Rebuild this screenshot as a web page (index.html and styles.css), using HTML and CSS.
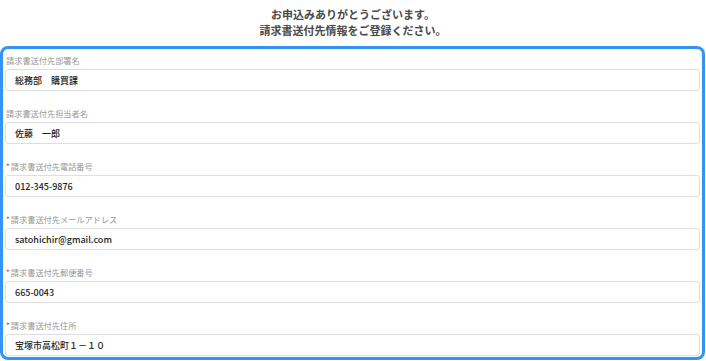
FILE: index.html
```html
<!DOCTYPE html>
<html lang="ja">
<head>
    <meta charset="UTF-8">
    <meta name="viewport" content="width=device-width, initial-scale=1.0">
    <title>請求書送付先情報</title>
    <link rel="stylesheet" href="styles.css">
</head>
<body>
    <div class="intro">
        <p>お申込みありがとうございます。</p>
        <p>請求書送付先情報をご登録ください。</p>
    </div>

    <form class="billing-box">
        <div class="field">
            <label>請求書送付先部署名</label>
            <input type="text" value="総務部　購買課">
        </div>
        <div class="field">
            <label>請求書送付先担当者名</label>
            <input type="text" value="佐藤　一郎">
        </div>
        <div class="field">
            <label class="required">請求書送付先電話番号</label>
            <input type="text" value="012-345-9876">
        </div>
        <div class="field">
            <label class="required">請求書送付先メールアドレス</label>
            <input type="text" value="satohichir@gmail.com">
        </div>
        <div class="field">
            <label class="required">請求書送付先郵便番号</label>
            <input type="text" value="665-0043">
        </div>
        <div class="field">
            <label class="required">請求書送付先住所</label>
            <input type="text" value="宝塚市高松町１－１０">
        </div>
    </form>
</body>
</html>
```

FILE: styles.css
```css
body {
    margin: 0;
    font-family: "Noto Sans CJK JP", "Noto Sans", sans-serif;
    background-color: #ffffff;
    color: #333;
}
.intro {
    padding-top: 6px;
    height: 40px;
    box-sizing: border-box;
    text-align: center;
}
.intro p {
    margin: 0;
    font-size: 11px;
    line-height: 16px;
    font-weight: bold;
    color: #4a4a4a;
}
.billing-box {
    width: 705px;
    margin-top: 6px;
    box-sizing: border-box;
    border: 3px solid #3394f5;
    border-radius: 8px;
    padding: 5px 2px 1px 2px;
}
.field {
    display: flex;
    flex-direction: column;
    margin-bottom: 16px;
}
.field:last-child {
    margin-bottom: 0;
}
.field label {
    font-size: 8.2px;
    line-height: 12px;
    color: #999;
    padding-left: 1px;
    margin-bottom: 3px;
}
.field label.required::before {
    content: "*";
    color: #e0403a;
    margin-right: 1px;
}
.field input {
    height: 22px;
    box-sizing: border-box;
    border: 1px solid #dedede;
    border-radius: 3px;
    padding: 0 9px;
    font-family: "Noto Sans CJK JP", "Noto Sans", sans-serif;
    font-size: 9px;
    font-weight: 500;
    color: #222;
    outline: none;
}
```
